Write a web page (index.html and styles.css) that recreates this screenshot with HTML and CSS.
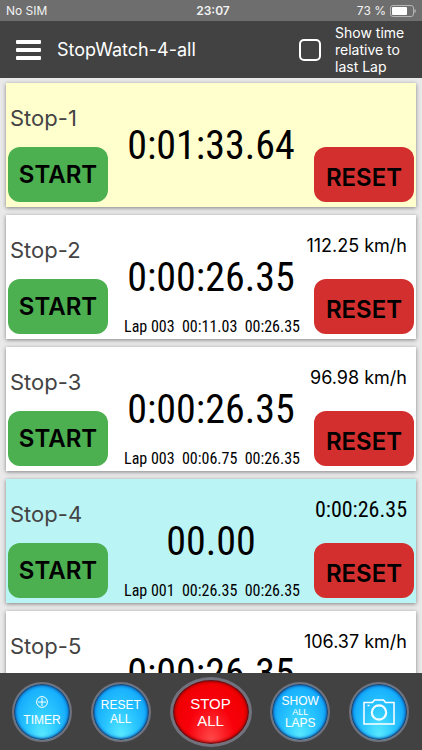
FILE: index.html
```html
<!DOCTYPE html>
<html lang="en">
<head>
<meta charset="utf-8">
<meta name="viewport" content="width=device-width, initial-scale=1">
<title>StopWatch-4-all</title>
<link rel="stylesheet" href="styles.css">
</head>
<body>
<div class="status">
  <span>No SIM</span>
  <strong class="clock">23:07</strong>
  <span class="power">73 %
    <svg width="26" height="12" viewBox="0 0 26 12" aria-hidden="true">
      <rect x=".5" y=".5" width="23" height="11" rx="2.5" fill="none" stroke="#b5b5b5"/>
      <rect x="2" y="2" width="15" height="8" rx="1" fill="#fff"/>
      <path d="M24.5 4v4q1.500-.6 1.500-2t-1.500-2z" fill="#b5b5b5"/>
    </svg>
  </span>
</div>
<header class="bar">
  <button class="menu" aria-label="Menu"><i></i><i></i><i></i></button>
  <h1>StopWatch-4-all</h1>
  <label class="relative"><input type="checkbox"><span>Show time relative to last Lap</span></label>
</header>
<main class="list">
  <section class="card yellow">
    <h2>Stop-1</h2>
    <output class="time">0:01:33.64</output>
    <button class="start">START</button>
    <button class="reset">RESET</button>
  </section>
  <section class="card">
    <h2>Stop-2</h2>
    <span class="speed">112.25 km/h</span>
    <output class="time">0:00:26.35</output>
    <button class="start">START</button>
    <span class="lap">Lap 003  00:11.03  00:26.35</span>
    <button class="reset">RESET</button>
  </section>
  <section class="card">
    <h2>Stop-3</h2>
    <span class="speed">96.98 km/h</span>
    <output class="time">0:00:26.35</output>
    <button class="start">START</button>
    <span class="lap">Lap 003  00:06.75  00:26.35</span>
    <button class="reset">RESET</button>
  </section>
  <section class="card cyan">
    <h2>Stop-4</h2>
    <span class="speed total">0:00:26.35</span>
    <output class="time">00.00</output>
    <button class="start">START</button>
    <span class="lap">Lap 001  00:26.35  00:26.35</span>
    <button class="reset">RESET</button>
  </section>
  <section class="card">
    <h2>Stop-5</h2>
    <span class="speed">106.37 km/h</span>
    <output class="time">0:00:26.35</output>
    <button class="start">START</button>
    <button class="reset">RESET</button>
  </section>
</main>
<footer class="dock">
  <button class="round">
    <svg width="12" height="12" viewBox="0 0 12 12" fill="none" stroke="#fff" aria-hidden="true"><circle cx="6" cy="6" r="5.400"/><path d="M6 2v8M2 6h8"/></svg>
    <span>TIMER</span>
  </button>
  <button class="round"><span>RESET</span><span>ALL</span></button>
  <button class="round stop"><span>STOP</span><span>ALL</span></button>
  <button class="round laps"><span>SHOW</span><small>ALL</small><span>LAPS</span></button>
  <button class="round" aria-label="Take photo">
    <svg width="32" height="26" viewBox="0 0 32 26" fill="none" stroke="#fff" stroke-width="1.500" aria-hidden="true"><path d="M1 3.500h8.500l2-2.500h9l2 2.500H31V25H1z"/><circle cx="16" cy="13.500" r="7.500"/><circle cx="16" cy="13.500" r="6.500" stroke-width="1"/><path d="M4.500 6.500h2"/></svg>
  </button>
</footer>
</body>
</html>
```
FILE: styles.css
```css
* { box-sizing: border-box; }
body {
  margin: 0;
  height: 100vh;
  display: flex;
  flex-direction: column;
  overflow: hidden;
  background: #e9e9e9;
  font-family: Inter, "Liberation Sans", sans-serif;
}
h1, h2 { margin: 0; font-weight: 400; }
button { border: 0; padding: 0; font-family: inherit; color: inherit; }

.status {
  display: grid;
  grid-template-columns: 1fr auto 1fr;
  align-items: center;
  height: 21px;
  padding: 0 6px;
  background: #6e6e6e;
  color: #f2f2f2;
  font-size: 12px;
}
.clock { padding-left: 4px; font-weight: 600; }
.power { display: flex; justify-content: flex-end; align-items: center; gap: 4px; }

.bar {
  display: flex;
  align-items: center;
  height: 57px;
  flex: none;
  padding: 0 16px;
  background: #424242;
  color: #fff;
}
.menu { display: grid; gap: 4px; width: 25px; margin-right: 16px; background: none; }
.menu i { height: 4px; border-radius: 1px; background: #fff; }
.bar h1 { font-size: 18px; }
.relative {
  display: flex;
  align-items: center;
  gap: 14px;
  margin-left: auto;
  font-size: 14px;
  line-height: 17px;
}
.relative span { width: 71px; }
.relative input {
  appearance: none;
  width: 22px;
  height: 22px;
  margin: 0;
  border: 2px solid #fff;
  border-radius: 5px;
}

.list {
  flex: 1;
  min-height: 0;
  overflow: hidden;
  display: flex;
  flex-direction: column;
  gap: 8px;
  padding: 5px 6px 0;
}
.card {
  flex: none;
  display: grid;
  grid-template-columns: 100px 1fr 100px;
  grid-template-rows: 64px 55px;
  padding: 0 2px 5px;
  background: #fff;
  box-shadow: 0 1px 4px rgba(0, 0, 0, .45);
}
.yellow { background: #ffffce; }
.cyan { background: #bbf4f5; }
.card h2 {
  grid-area: 1 / 1;
  padding: 20px 2px 0;
  font-size: 22px;
  line-height: 30px;
  color: #444;
}
.speed {
  grid-area: 1 / 2 / 2 / 4;
  justify-self: end;
  padding: 19px 7px 0 0;
  font-size: 18px;
  line-height: 24px;
}
.time, .lap, .total { font-family: "Roboto Condensed", "Liberation Sans Narrow", "Open Sans Condensed", sans-serif; }
.total { font-size: 22px; }
.time {
  grid-area: 1 / 2 / 3 / 3;
  justify-self: center;
  padding-top: 38px;
  font-size: 40px;
  line-height: 50px;
}
.lap {
  grid-area: 2 / 2;
  align-self: end;
  justify-self: end;
  padding-right: 14px;
  white-space: pre;
  font-size: 16px;
  line-height: 14px;
}
.start, .reset {
  grid-row: 2;
  border-radius: 12px;
  font-size: 24px;
  font-weight: 600;
}
.start { grid-column: 1; background: #4caf50; }
.reset { grid-column: 3; padding-top: 6px; background: #d32f2f; }

.dock {
  flex: none;
  display: flex;
  justify-content: space-between;
  align-items: center;
  height: 77px;
  padding: 0 13px 0 12px;
  background: #424242;
}
.round {
  display: flex;
  flex-direction: column;
  align-items: center;
  justify-content: center;
  width: 60px;
  height: 60px;
  border: 2px solid #70727d;
  border-radius: 50%;
  background: radial-gradient(ellipse at 50% 95%, #5aeaff 0, #2ac6ff 40%, #10a6fb 80%);
  box-shadow: inset 0 0 1px 1px #28405e, inset 0 0 3px 2px #0768c4;
  color: #fff;
  font-family: "Liberation Sans", sans-serif;
  font-size: 12px;
  line-height: 14px;
}
.round small { font-size: 9px; line-height: 8px; }
.round svg + span { margin-top: 5px; }
.stop {
  width: 82px;
  height: 70px;
  border-width: 3px;
  background: radial-gradient(ellipse at 50% 95%, #ff4a4a 0, #f8000b 45%, #ee0000 80%);
  box-shadow: inset 0 0 1px 1px #4b1820, inset 0 0 3px 2px #a80000;
  font-size: 15px;
  line-height: 17px;
}
```
